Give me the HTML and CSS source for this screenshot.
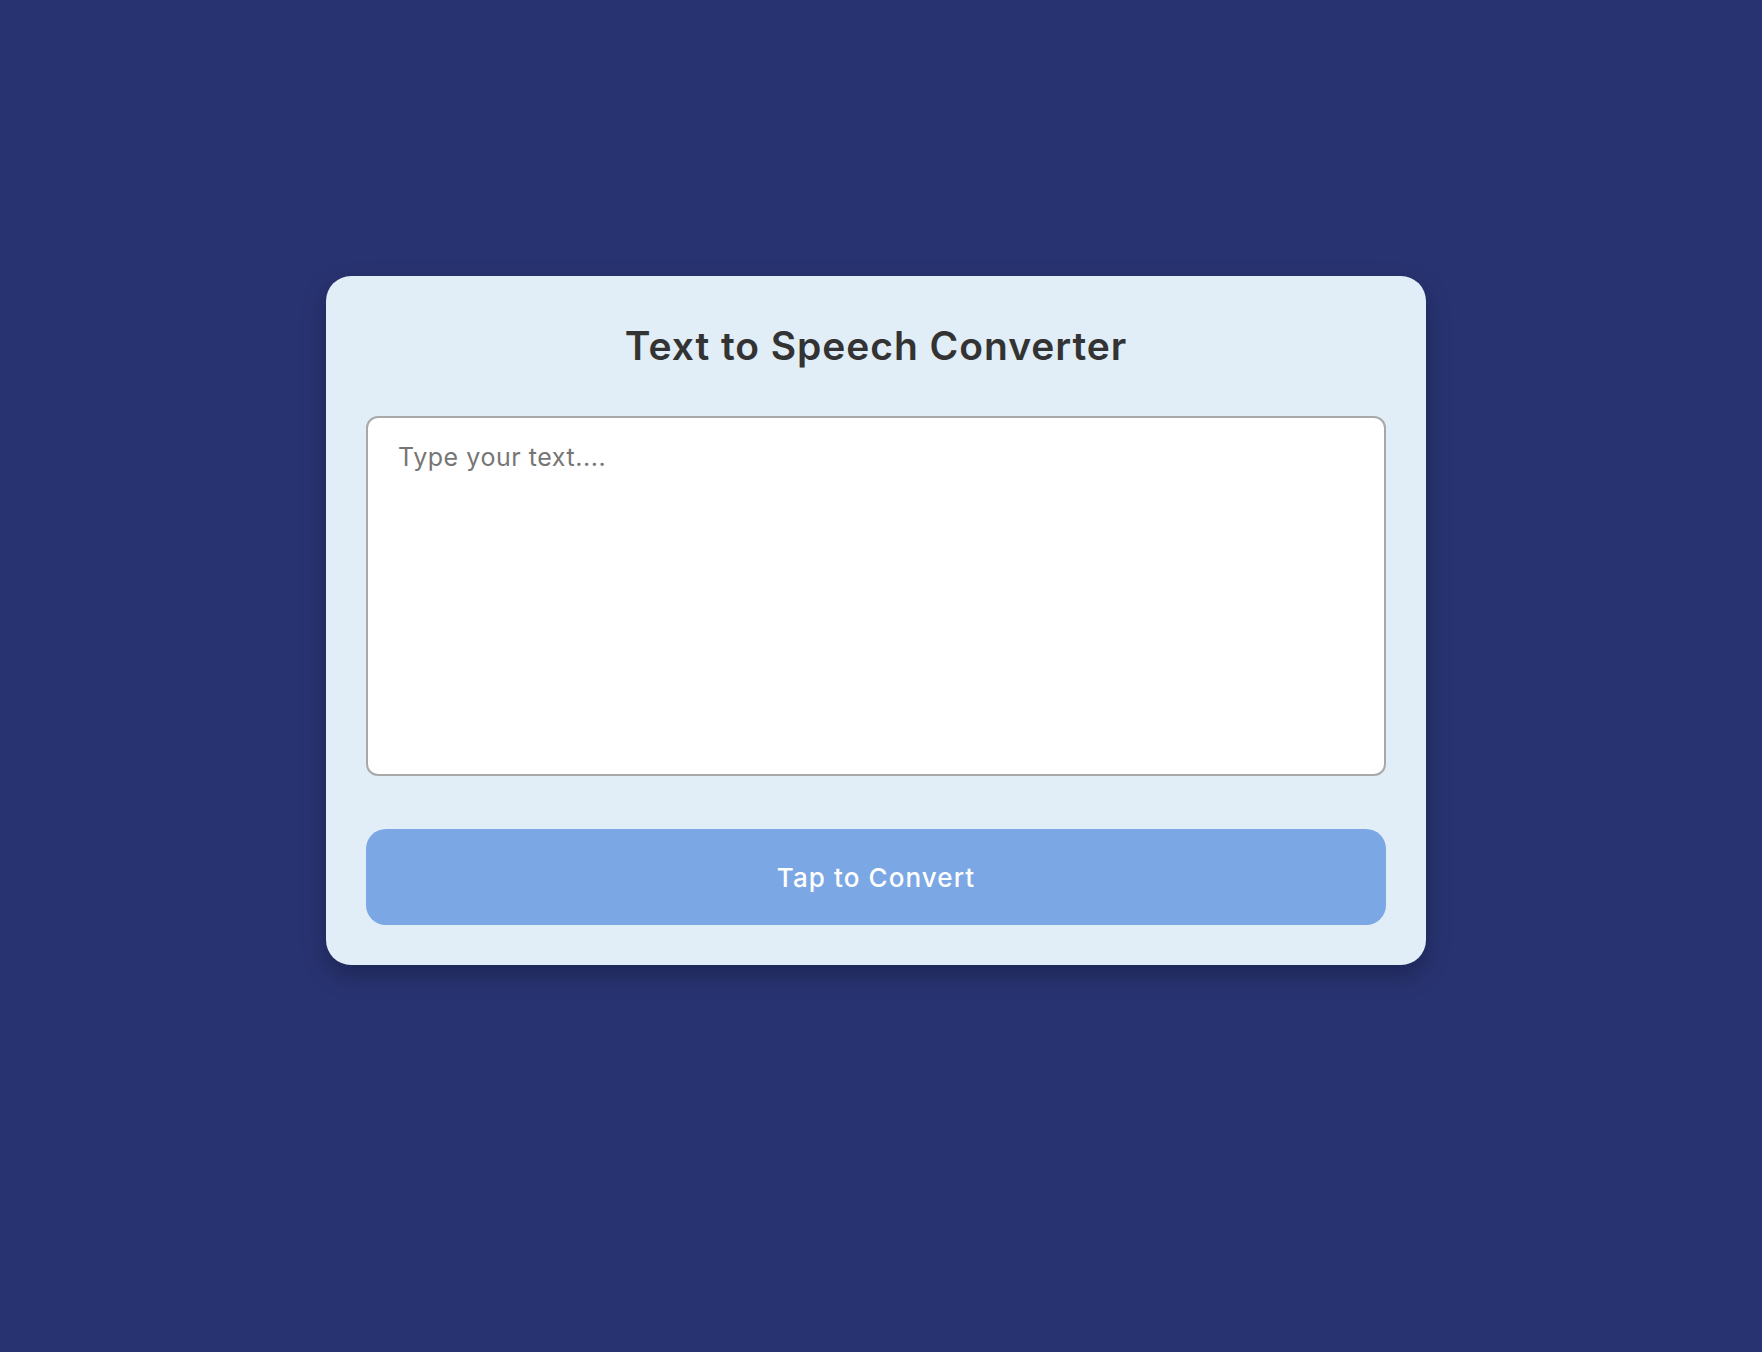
FILE: index.html
```html
<!DOCTYPE html>
<html lang="en">
<head>
<meta charset="utf-8">
<title>Text to Speech Converter</title>
<link rel="stylesheet" href="styles.css">
</head>
<body>
<div class="page">
  <div class="card">
    <h1 class="title">Text to Speech Converter</h1>
    <textarea class="input" placeholder="Type your text...."></textarea>
    <button class="convert">Tap to Convert</button>
  </div>
</div>
</body>
</html>
```
FILE: styles.css
```css
html, body {
  margin: 0;
  padding: 0;
  background: #283371;
  height: 100%;
}
.page {
  display: flex;
  justify-content: center;
  padding-top: 276px;
  padding-right: 10px;
  box-sizing: border-box;
  font-family: "Inter", "Noto Sans", sans-serif;
}
.card {
  width: 1100px;
  box-sizing: border-box;
  background: #e1eef7;
  border-radius: 25px;
  padding: 40px 40px 40px;
  display: flex;
  flex-direction: column;
  box-shadow: 0 10px 25px rgba(0, 0, 0, 0.25);
}
.title {
  margin: 0 0 40px;
  text-align: center;
  font-size: 39px;
  font-weight: 600;
  color: #333333;
  line-height: 60px;
  letter-spacing: 0.95px;
}
.input {
  display: block;
  width: 100%;
  height: 360px;
  box-sizing: border-box;
  border: 2px solid #a8a8a8;
  border-radius: 12px;
  padding: 24px 30px 22px;
  font-family: inherit;
  font-size: 25px;
  letter-spacing: 0.55px;
  color: #333;
  background: #fff;
  resize: none;
  outline: none;
}
.input::placeholder {
  color: #767676;
}
.convert {
  margin-top: 53px;
  height: 96px;
  width: 100%;
  border: none;
  border-radius: 20px;
  background: #7ba7e4;
  color: #ffffff;
  font-family: inherit;
  font-size: 26px;
  font-weight: 500;
  letter-spacing: 1.1px;
  cursor: pointer;
}
```
